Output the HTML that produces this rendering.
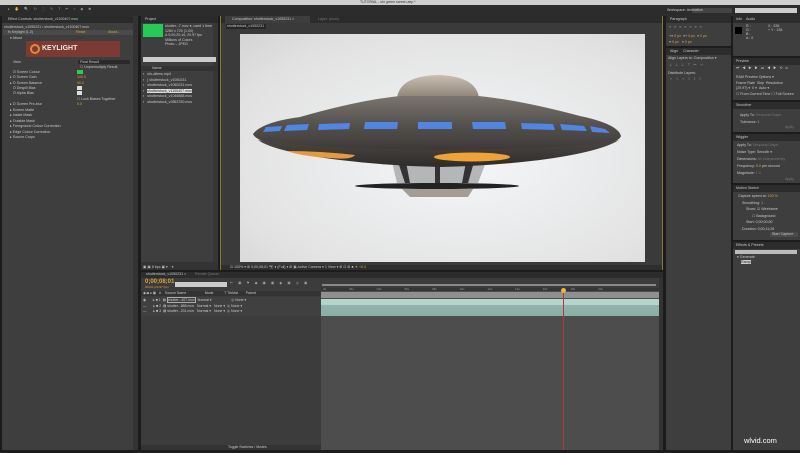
<!DOCTYPE html>
<html><head><meta charset="utf-8"><style>
*{margin:0;padding:0;box-sizing:border-box}
body{width:800px;height:453px;background:#1c1c1c;position:relative;overflow:hidden;font-family:"Liberation Sans",sans-serif;font-size:4px;color:#bbb}
.a{position:absolute}
.p{position:absolute;background:#3e3e3e}
.tab{position:absolute;height:7px;background:#2a2a2a}
.t{position:absolute;white-space:nowrap;font-size:3.6px;color:#c8c8c8}
.o{color:#d9a43a}
</style></head><body>
<div class="a" style="left:0;top:0;width:800px;height:5px;background:#cfcfcf"></div>
<div class="t" style="left:360px;top:0;color:#333;font-size:3.5px">TUTORIAL - ufo green screen.aep *</div>
<div class="a" style="left:0;top:5px;width:800px;height:11px;background:#2c2c2c"></div>
<div class="t" style="left:8px;top:7px;color:#999;letter-spacing:5px">▸✋🔍↻⬚✎T✒⌂◆✱</div>
<div class="a" style="left:692px;top:8px;width:40px;height:5px;background:#444"></div>
<div class="t" style="left:667px;top:8px">Workspace: Animation</div>
<div class="a" style="left:735px;top:8px;width:62px;height:5px;background:#ccc"></div>
<div class="p" style="left:2px;top:16px;width:131px;height:434px"></div>
<div class="a" style="left:133px;top:16px;width:5px;height:434px;background:#333"></div>
<div class="tab" style="left:2px;top:16px;width:131px"></div>
<div class="t" style="left:8px;top:17px">Effect Controls: shutterstock_v1100407.mov</div>
<div class="t" style="left:4px;top:25px">shutterstock_v1050231 • shutterstock_v1100407.mov</div>
<div class="a" style="left:3px;top:30px;width:130px;height:5px;background:#4a4a4a"></div>
<div class="t" style="left:8px;top:30px">fx Keylight (1.2)</div>
<div class="t o" style="left:76px;top:30px">Reset</div><div class="t o" style="left:108px;top:30px">About...</div>
<div class="t" style="left:10px;top:36px">▾ About</div>
<div class="a" style="left:26px;top:41px;width:94px;height:16px;background:#7b3a33"></div>
<div class="a" style="left:30px;top:44px;width:10px;height:10px;border-radius:50%;border:2px solid #e08a3a"></div>
<div class="t" style="left:42px;top:45px;font-size:7px;font-weight:bold;color:#f2e6dc">KEYLIGHT</div>
<div class="a" style="left:78px;top:60px;width:52px;height:4px;background:#2a2a2a"></div>
<div class="t" style="left:13px;top:60px">View</div><div class="t" style="left:80px;top:60px">Final Result</div>
<div class="t" style="left:80px;top:65px">☐ Unpremultiply Result</div>
<div class="t" style="left:13px;top:70px">Ö Screen Colour</div><div class="a" style="left:77px;top:70px;width:6px;height:4px;background:#2ecc50"></div>
<div class="t" style="left:10px;top:75px">▸ Ö Screen Gain</div><div class="t o" style="left:77px;top:75px">100.0</div>
<div class="t" style="left:10px;top:81px">▸ Ö Screen Balance</div><div class="t o" style="left:77px;top:81px">50.0</div>
<div class="t" style="left:13px;top:86px">Ö Despill Bias</div><div class="a" style="left:77px;top:86px;width:5px;height:4px;background:#ddd"></div>
<div class="t" style="left:13px;top:91px">Ö Alpha Bias</div><div class="a" style="left:77px;top:91px;width:5px;height:4px;background:#ddd"></div>
<div class="t" style="left:77px;top:97px">☐ Lock Biases Together</div>
<div class="t" style="left:10px;top:102px">▸ Ö Screen Pre-blur</div><div class="t o" style="left:77px;top:102px">0.0</div>
<div class="t" style="left:10px;top:108px">▸ Screen Matte</div>
<div class="t" style="left:10px;top:113px">▸ Inside Mask</div>
<div class="t" style="left:10px;top:119px">▸ Outside Mask</div>
<div class="t" style="left:10px;top:124px">▸ Foreground Colour Correction</div>
<div class="t" style="left:10px;top:130px">▸ Edge Colour Correction</div>
<div class="t" style="left:10px;top:135px">▸ Source Crops</div>
<div class="p" style="left:141px;top:16px;width:72px;height:254px"></div>
<div class="a" style="left:213px;top:16px;width:5px;height:254px;background:#363636"></div>
<div class="tab" style="left:141px;top:16px;width:77px"></div>
<div class="t" style="left:145px;top:17px">Project</div>
<div class="a" style="left:143px;top:24px;width:20px;height:13px;background:#22cc55"></div>
<div class="t" style="left:165px;top:24px;line-height:4.5px">shutter...7.mov ▾, used 1 time<br>1280 x 720 (1.00)<br>Δ 0;00;20;16, 29.97 fps<br>Millions of Colors<br>Photo – JPEG</div>
<div class="a" style="left:143px;top:57px;width:73px;height:5px;background:#ccc"></div>
<div class="a" style="left:141px;top:66px;width:77px;height:5px;background:#333"></div>
<div class="t" style="left:152px;top:66px">Name</div>
<div class="t" style="left:143px;top:72px;line-height:5.5px">▪ &nbsp;&nbsp;ufo-aliens.mp4<br>▪ &nbsp;&nbsp;[ shutterstock_v1050231<br>▪ &nbsp;&nbsp;shutterstock_v1050231.mov<br>▪ &nbsp;&nbsp;<span style="background:#ddd;color:#222">shutterstock_v1100407.mov</span><br>▪ &nbsp;&nbsp;shutterstock_v1046888.mov<br>▪ &nbsp;&nbsp;shutterstock_v2853750.mov</div>
<div class="a" style="left:141px;top:262px;width:77px;height:8px;background:#333"></div>
<div class="p" style="left:220px;top:16px;width:443px;height:254px;background:#3a3a3a;border:1px solid #8a7630"></div>
<div class="tab" style="left:221px;top:16px;width:441px;background:#2b2b2b"></div>
<div class="a" style="left:225px;top:16px;width:85px;height:7px;background:#3d3d3d"></div>
<div class="t" style="left:232px;top:17px">Composition: shutterstock_v1050231 ×</div>
<div class="t" style="left:318px;top:17px;color:#777">Layer: (none)</div>
<div class="a" style="left:226px;top:24px;width:40px;height:5px;background:#262626"></div>
<div class="t" style="left:227px;top:24px">shutterstock_v1050231</div>
<div class="a" style="left:240px;top:34px;width:405px;height:228px;background:radial-gradient(ellipse at 55% 55%,#f4f6f8,#e2e2e2 75%,#d4d4d4)"></div>
<svg class="a" style="left:240px;top:34px" width="405" height="228" viewBox="240 34 405 228">
<defs>
<linearGradient id="dm" x1="0" y1="0" x2="0" y2="1"><stop offset="0" stop-color="#c9beb0"/><stop offset="1" stop-color="#8d8378"/></linearGradient>
<linearGradient id="bd" x1="0" y1="0" x2="0" y2="1"><stop offset="0" stop-color="#7a756f"/><stop offset=".5" stop-color="#57534f"/><stop offset="1" stop-color="#3b3937"/></linearGradient>
<linearGradient id="lw" x1="0" y1="0" x2="0" y2="1"><stop offset="0" stop-color="#4a4744"/><stop offset="1" stop-color="#2e2c2a"/></linearGradient>
</defs>
<path d="M397 98 Q400 76 438 75 Q476 76 479 98 Z" fill="url(#dm)"/>
<path d="M392 162 L397 183 L478 183 L486 162 Z" fill="#b4b6b8"/>
<path d="M398 162 L405 183 L410 183 L406 162 Z M466 162 L462 183 L468 183 L474 162 Z M435 162 L435 183 L440 183 L440 162 Z" fill="#333"/>
<path d="M253 134 Q262 122 300 117 Q360 100 400 96 L478 96 Q520 100 580 116 Q618 124 621 136 Q618 146 560 150 L320 150 Q258 146 253 134 Z" fill="url(#bd)"/>
<path d="M258 140 Q300 148 440 150 Q590 148 619 140 Q600 152 540 160 Q490 166 440 167 Q390 166 340 160 Q275 152 258 140 Z" fill="url(#lw)"/>
<ellipse cx="437" cy="186" rx="82" ry="3" fill="#222"/>
<path d="M402 189 L473 189 L468 197 L410 197 Z" fill="#a39d95"/>
<g fill="#4f86e6">
<path d="M266 127 L282 126 L280 131 L263 132 Z"/><path d="M287 125 L309 124 L307 130 L284 131 Z"/>
<path d="M319 124 L350 123 L349 129 L318 130 Z"/><path d="M365 122 L398 122 L397 129 L364 129 Z"/>
<path d="M418 122 L452 122 L452 129 L418 129 Z"/><path d="M472 122 L505 122 L506 129 L473 129 Z"/>
<path d="M521 123 L553 124 L555 130 L522 129 Z"/><path d="M560 124 L584 126 L587 131 L562 130 Z"/>
<path d="M590 126 L605 129 L610 133 L592 132 Z"/></g>
<ellipse cx="472" cy="157" rx="38" ry="4.5" fill="#f0a235"/>
<path d="M287 151 Q320 151 355 155 Q352 160 330 158 Q300 156 287 151 Z" fill="#e89a38"/>
</svg>
<div class="a" style="left:221px;top:265px;width:441px;height:5px;background:#2e2e2e"></div>
<div class="t" style="left:230px;top:265px">⊡ 100% ▾ ⊞ 0;00;08;01 📷 ♦ (Full) ▾ ⊞ ▣ Active Camera ▾ 1 View ▾ ⊞ ⊡ ⊞ ♣ ☀ <span class="o">+0.0</span></div>
<div class="t" style="left:143px;top:265px">▣ ▣ 8 bpc ▣ ▾ &nbsp;&nbsp;&nbsp;▾</div>
<div class="p" style="left:141px;top:272px;width:522px;height:178px;background:#3c3c3c"></div>
<div class="tab" style="left:141px;top:272px;width:522px;height:6px;background:#2c2c2c"></div>
<div class="t" style="left:146px;top:272px">shutterstock_v1050231 ×</div><div class="t" style="left:195px;top:272px;color:#777">Render Queue</div>
<div class="t o" style="left:145px;top:279px;font-size:6px;font-weight:bold">0;00;08;01</div>
<div class="t o" style="left:145px;top:285px;font-size:3px">00241 (29.97 fps)</div>
<div class="a" style="left:175px;top:282px;width:52px;height:5px;background:#ccc"></div>
<div class="t" style="left:230px;top:281px;letter-spacing:2px;color:#aaa">⊢ ▣ ⚑ ◆ ▣ ▣ ◉ ▣ ◎ ▣</div>
<div class="a" style="left:141px;top:291px;width:180px;height:5px;background:#333"></div>
<div class="t" style="left:143px;top:291px;font-size:3.5px">◉◀ ● ▣ &nbsp;&nbsp;# &nbsp;&nbsp;&nbsp;Source Name &nbsp;&nbsp;&nbsp;&nbsp;&nbsp;&nbsp;&nbsp;&nbsp;&nbsp;&nbsp;&nbsp;&nbsp;&nbsp;&nbsp;&nbsp;&nbsp;&nbsp;&nbsp;Mode &nbsp;&nbsp;&nbsp;&nbsp;&nbsp;&nbsp;&nbsp;&nbsp;&nbsp;&nbsp;T TrkMat &nbsp;&nbsp;&nbsp;&nbsp;&nbsp;&nbsp;&nbsp;Parent</div>
<div class="a" style="left:141px;top:297px;width:180px;height:19px;background:#404040"></div>
<div class="t" style="left:143px;top:298px;line-height:5.5px;font-size:3.5px">◉ &nbsp;&nbsp;&nbsp;&nbsp;&nbsp;&nbsp;▸ ■ 1 &nbsp;▤ <span style="border:1px solid #aaa">shutter...407.mov</span> &nbsp;Normal ▾ &nbsp;&nbsp;&nbsp;&nbsp;&nbsp;&nbsp;&nbsp;&nbsp;&nbsp;&nbsp;&nbsp;&nbsp;&nbsp;&nbsp;&nbsp;&nbsp;&nbsp;&nbsp;&nbsp;◎ None ▾<br>— &nbsp;&nbsp;&nbsp;&nbsp;&nbsp;&nbsp;▸ ■ 2 &nbsp;▤ shutter...888.mov &nbsp;&nbsp;Normal ▾ &nbsp;&nbsp;None ▾ &nbsp;◎ None ▾<br>— &nbsp;&nbsp;&nbsp;&nbsp;&nbsp;&nbsp;▸ ■ 3 &nbsp;▤ shutter...231.mov &nbsp;&nbsp;Normal ▾ &nbsp;&nbsp;None ▾ &nbsp;◎ None ▾</div>
<div class="a" style="left:321px;top:278px;width:338px;height:172px;background:#4d4d4d"></div>
<div class="a" style="left:321px;top:278px;width:338px;height:10px;background:#3c3c3c"></div>
<div class="a" style="left:322px;top:284px;width:334px;height:2px;background:#888"></div>
<div class="a" style="left:321px;top:288px;width:338px;height:3px;background:#353535"></div>
<div class="t" style="left:323px;top:287px;font-size:3px;word-spacing:22px;color:#999">0s 02s 04s 06s 08s 10s 12s 14s 16s 18s 20s</div>
<div class="a" style="left:321px;top:292px;width:338px;height:6px;background:#8f8f8f"></div>
<div class="a" style="left:321px;top:299px;width:338px;height:6px;background:#b4d4cc"></div>
<div class="a" style="left:321px;top:305px;width:338px;height:5px;background:#8fb3aa"></div>
<div class="a" style="left:321px;top:310px;width:338px;height:6px;background:#8cafa7"></div>
<div class="a" style="left:563px;top:288px;width:1px;height:162px;background:#b53a2e"></div>
<div class="a" style="left:561px;top:288px;width:5px;height:5px;border-radius:50%;background:#e8c020"></div>
<div class="a" style="left:659px;top:278px;width:4px;height:172px;background:#333"></div>
<div class="a" style="left:141px;top:445px;width:180px;height:5px;background:#333"></div>
<div class="t" style="left:228px;top:445px;font-size:3.5px">Toggle Switches / Modes</div>
<div class="p" style="left:666px;top:16px;width:65px;height:434px"></div>
<div class="tab" style="left:666px;top:16px;width:65px;background:#2c2c2c"></div>
<div class="t" style="left:670px;top:17px">Paragraph</div>
<div class="t" style="left:669px;top:25px;letter-spacing:3px;color:#999">≡≡≡≡≡≡≡</div>
<div class="t" style="left:669px;top:33px;line-height:6px">+≡ <span class="o">0 px</span> &nbsp;≡+ <span class="o">0 px</span> &nbsp;≡ <span class="o">0 px</span><br>≡ <span class="o">0 px</span> &nbsp;&nbsp;≡ <span class="o">0 px</span></div>
<div class="a" style="left:666px;top:46px;width:65px;height:2px;background:#1c1c1c"></div>
<div class="tab" style="left:666px;top:48px;width:65px;background:#2c2c2c"></div>
<div class="t" style="left:670px;top:49px">Align &nbsp;&nbsp;&nbsp;&nbsp;Character</div>
<div class="t" style="left:668px;top:56px">Align Layers to: Composition ▾</div>
<div class="t" style="left:669px;top:63px;letter-spacing:3px;color:#999">⊥⊥⊥⊤⊢⊣</div>
<div class="t" style="left:668px;top:71px">Distribute Layers:</div>
<div class="t" style="left:670px;top:77px;letter-spacing:4px;color:#777">≡≡≡⫴⫴⫴</div>
<div class="p" style="left:733px;top:16px;width:67px;height:434px"></div>
<div class="tab" style="left:733px;top:16px;width:67px;background:#2c2c2c"></div>
<div class="t" style="left:736px;top:17px">Info &nbsp;&nbsp;&nbsp;Audio</div>
<div class="a" style="left:735px;top:27px;width:7px;height:7px;background:#000"></div>
<div class="t" style="left:746px;top:24px;line-height:4px">R :<br>G :<br>B :<br>A : 0</div>
<div class="t" style="left:768px;top:24px;line-height:4px">X : 226<br>+ Y : 136</div>
<div class="a" style="left:733px;top:56px;width:67px;height:2px;background:#1c1c1c"></div>
<div class="tab" style="left:733px;top:58px;width:67px;background:#2c2c2c"></div><div class="t" style="left:736px;top:59px">Preview</div>
<div class="t" style="left:736px;top:66px;letter-spacing:3px">⏮◀▶▶⏭◀▶⟲⊡</div>
<div class="t" style="left:736px;top:75px;line-height:5.5px">RAM Preview Options ▾<br>Frame Rate &nbsp;Skip &nbsp;Resolution<br>(29.97) ▾ &nbsp;0 ▾ &nbsp;Auto ▾<br>☐ From Current Time ☐ Full Screen</div>
<div class="a" style="left:733px;top:100px;width:67px;height:2px;background:#1c1c1c"></div>
<div class="tab" style="left:733px;top:102px;width:67px;background:#2c2c2c"></div><div class="t" style="left:736px;top:103px">Smoother</div>
<div class="t" style="left:740px;top:112px;line-height:7px">Apply To: <span style="color:#777">Temporal Graph</span><br>Tolerance: <span class="o">1</span></div>
<div class="t" style="left:785px;top:125px;color:#777">Apply</div>
<div class="a" style="left:733px;top:132px;width:67px;height:2px;background:#1c1c1c"></div>
<div class="tab" style="left:733px;top:134px;width:67px;background:#2c2c2c"></div><div class="t" style="left:736px;top:135px">Wiggler</div>
<div class="t" style="left:737px;top:142px;line-height:7px">Apply To: <span style="color:#777">Temporal Graph</span><br>Noise Type: Smooth ▾<br>Dimensions: <span style="color:#777">All Independently</span><br>Frequency: <span class="o">5.0</span> per second<br>Magnitude: <span style="color:#777">1.0</span></div>
<div class="t" style="left:785px;top:177px;color:#777">Apply</div>
<div class="a" style="left:733px;top:183px;width:67px;height:2px;background:#1c1c1c"></div>
<div class="tab" style="left:733px;top:185px;width:67px;background:#2c2c2c"></div><div class="t" style="left:736px;top:186px">Motion Sketch</div>
<div class="t" style="left:738px;top:193px;line-height:6.5px">Capture speed at: <span class="o">100 %</span><br>&nbsp;&nbsp;&nbsp;&nbsp;Smoothing: <span class="o">1</span><br>&nbsp;&nbsp;&nbsp;&nbsp;&nbsp;&nbsp;&nbsp;&nbsp;Show: ☑ Wireframe<br>&nbsp;&nbsp;&nbsp;&nbsp;&nbsp;&nbsp;&nbsp;&nbsp;&nbsp;&nbsp;&nbsp;&nbsp;&nbsp;&nbsp;☐ Background<br>&nbsp;&nbsp;&nbsp;&nbsp;&nbsp;&nbsp;&nbsp;&nbsp;Start: 0;00;00;00<br>&nbsp;&nbsp;&nbsp;&nbsp;Duration: 0;00;11;26</div>
<div class="a" style="left:770px;top:232px;width:28px;height:5px;background:#4a4a4a"></div><div class="t" style="left:772px;top:232px">Start Capture</div>
<div class="a" style="left:733px;top:240px;width:67px;height:2px;background:#1c1c1c"></div>
<div class="tab" style="left:733px;top:242px;width:67px;background:#2c2c2c"></div><div class="t" style="left:736px;top:243px">Effects &amp; Presets</div>
<div class="a" style="left:735px;top:250px;width:62px;height:4px;background:#bbb"></div>
<div class="t" style="left:737px;top:255px;line-height:5px">▾ Generate<br>&nbsp;&nbsp;&nbsp;&nbsp;<span style="background:#ccc;color:#222">Ramp</span></div>
<div class="t" style="left:744px;top:436px;font-size:7.5px;color:#fff">wlvid.com</div>
</body></html>
